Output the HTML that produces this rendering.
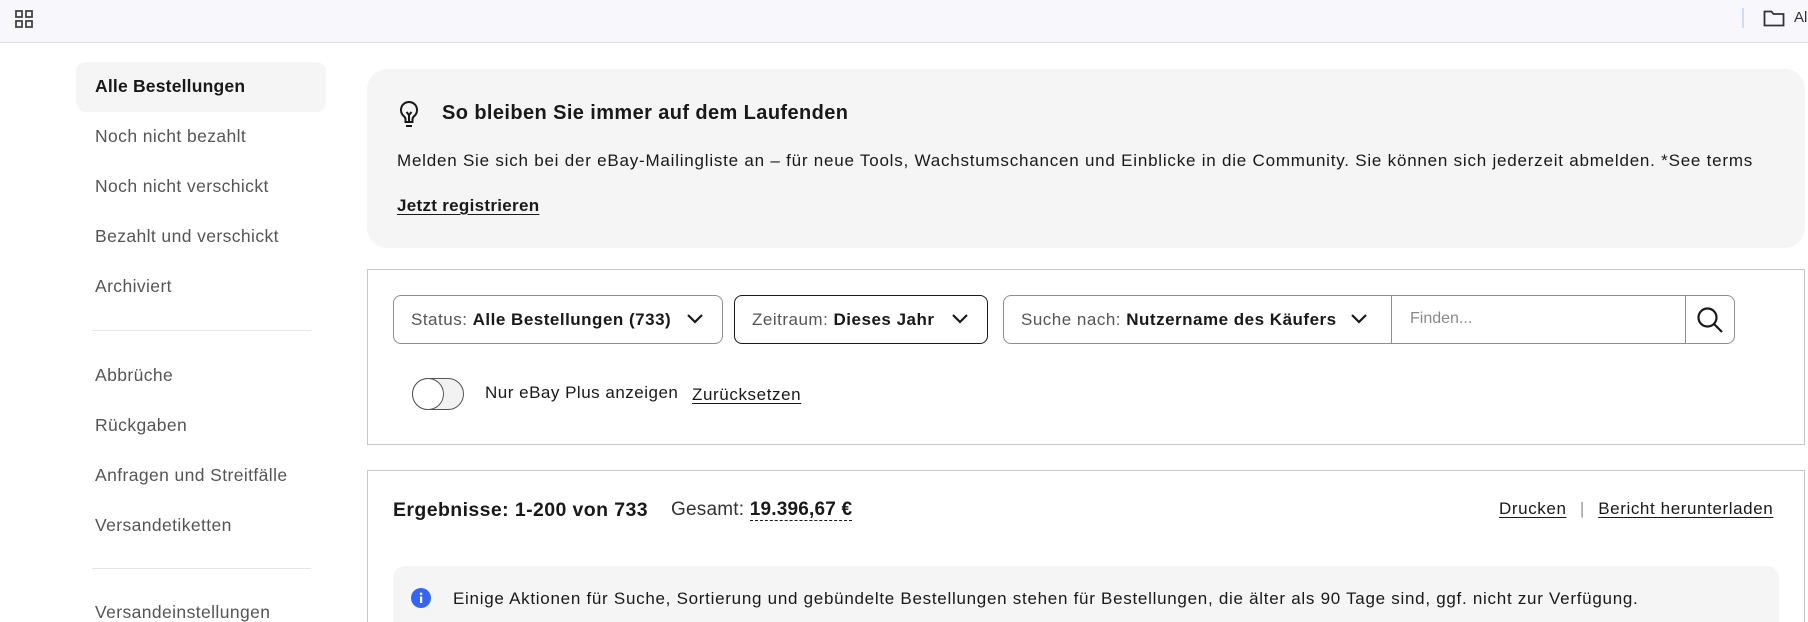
<!DOCTYPE html>
<html><head><meta charset="utf-8">
<style>
*{box-sizing:border-box;margin:0;padding:0}
html,body{width:1808px;height:622px;overflow:hidden}
body{background:#fff;font-family:"Liberation Sans",sans-serif;color:#191919}
#w{position:relative;width:1808px;height:622px;overflow:hidden}
.abs{position:absolute;white-space:nowrap}
.top{position:absolute;left:0;top:0;width:1808px;height:43px;background:#f8f8fc;border-bottom:1px solid #dcdce4}
.side{font-size:17.5px;letter-spacing:0.4px;color:#555}
.side.b{color:#191919;font-weight:bold;letter-spacing:0.2px}
.hl{position:absolute;left:76px;top:62px;width:250px;height:50px;background:#f5f5f5;border-radius:10px}
.div{position:absolute;left:92px;width:219px;height:1px;background:#e5e5e5}
.banner{position:absolute;left:367px;top:69px;width:1438px;height:179px;background:#f5f5f5;border-radius:20px}
.box{position:absolute;left:367px;width:1438px;border:1px solid #c7c7c7;background:#fff}
.dd{position:absolute;top:295px;height:49px;border:1px solid #8f8f8f;border-radius:8px;font-size:17px;letter-spacing:0.5px;padding-left:17px;line-height:47px;color:#555}
.dd b{color:#191919}
.dd svg{position:absolute;right:18px;top:16px}
u{text-decoration:underline;text-underline-offset:3px}
</style></head><body><div id="w">
<div class="top">
 <svg class="abs" style="left:14px;top:9px" width="20" height="20" viewBox="0 0 20 20" fill="none" stroke="#444" stroke-width="1.8"><rect x="2" y="2" width="6" height="6"/><rect x="12" y="2" width="6" height="6"/><rect x="2" y="12" width="6" height="6"/><rect x="12" y="12" width="6" height="6"/></svg>
 <div class="abs" style="left:1742px;top:8px;width:2px;height:20px;background:#d0dcf0"></div>
 <svg class="abs" style="left:1763px;top:9px" width="22" height="18" viewBox="0 0 22 18" fill="none" stroke="#333" stroke-width="1.8"><path d="M1.5 2.5h7l2 2.5h10v11.5h-19z"/></svg>
 <div class="abs" style="left:1794px;top:9px;font-size:15px;color:#333">Al</div>
</div>

<div class="hl"></div>
<div class="abs side b" style="left:95px;top:76px">Alle Bestellungen</div>
<div class="abs side" style="left:95px;top:126px">Noch nicht bezahlt</div>
<div class="abs side" style="left:95px;top:176px">Noch nicht verschickt</div>
<div class="abs side" style="left:95px;top:226px">Bezahlt und verschickt</div>
<div class="abs side" style="left:95px;top:276px">Archiviert</div>
<div class="div" style="top:330px"></div>
<div class="abs side" style="left:95px;top:365px">Abbrüche</div>
<div class="abs side" style="left:95px;top:415px">Rückgaben</div>
<div class="abs side" style="left:95px;top:465px">Anfragen und Streitfälle</div>
<div class="abs side" style="left:95px;top:515px">Versandetiketten</div>
<div class="div" style="top:568px"></div>
<div class="abs side" style="left:95px;top:602px">Versandeinstellungen</div>

<div class="banner"></div>
<svg class="abs" style="left:398px;top:100px" width="22" height="28" viewBox="0 0 22 28" fill="none" stroke="#191919" stroke-width="2"><path d="M11 2a8 8 0 0 0-5 14.3c1 .9 1.5 2 1.5 3.2V22h7v-2.5c0-1.2.5-2.3 1.5-3.2A8 8 0 0 0 11 2z"/><path d="M8 26h6M8.5 12l2.5 3 2.5-3M11 15v7"/></svg>
<div class="abs" style="left:442px;top:102px;font-size:20px;font-weight:bold;letter-spacing:0.4px">So bleiben Sie immer auf dem Laufenden</div>
<div class="abs" style="left:397px;top:151px;font-size:17px;letter-spacing:0.78px">Melden Sie sich bei der eBay-Mailingliste an – für neue Tools, Wachstumschancen und Einblicke in die Community. Sie können sich jederzeit abmelden. *See terms</div>
<div class="abs" style="left:397px;top:196px;font-size:17px;font-weight:bold;letter-spacing:0.3px"><u>Jetzt registrieren</u></div>

<div class="box" style="top:269px;height:176px"></div>
<div class="dd" style="left:393px;width:330px">Status: <b>Alle Bestellungen (733)</b><svg width="18" height="14" viewBox="0 0 18 14" fill="none" stroke="#191919" stroke-width="2.2"><path d="M2 3l7 7 7-7"/></svg></div>
<div class="dd" style="left:734px;width:254px;border-color:#191919">Zeitraum: <b>Dieses Jahr</b><svg width="18" height="14" viewBox="0 0 18 14" fill="none" stroke="#191919" stroke-width="2.2"><path d="M2 3l7 7 7-7"/></svg></div>
<div class="dd" style="left:1003px;width:732px;border-radius:8px">Suche nach: <b>Nutzername des Käufers</b><svg style="right:auto;left:346px" width="18" height="14" viewBox="0 0 18 14" fill="none" stroke="#191919" stroke-width="2.2"><path d="M2 3l7 7 7-7"/></svg></div>
<div class="abs" style="left:1391px;top:295px;width:1px;height:49px;background:#8f8f8f"></div>
<div class="abs" style="left:1685px;top:295px;width:1px;height:49px;background:#8f8f8f"></div>
<div class="abs" style="left:1410px;top:310px;font-size:16px;color:#8a8a8a">Finden...</div>
<svg class="abs" style="left:1695px;top:305px" width="30" height="30" viewBox="0 0 30 30" fill="none" stroke="#191919" stroke-width="2.2"><circle cx="12.5" cy="12.5" r="9"/><path d="M19 19l8 8"/></svg>
<div class="abs" style="left:412px;top:378px;width:52px;height:32px;border:1.5px solid #555;border-radius:16px;background:#f2f2f2"></div>
<div class="abs" style="left:412px;top:378px;width:32px;height:32px;border:1.5px solid #555;border-radius:50%;background:#fff"></div>
<div class="abs" style="left:485px;top:383px;font-size:17px;letter-spacing:0.5px">Nur eBay Plus anzeigen</div>
<div class="abs" style="left:692px;top:385px;font-size:17px;letter-spacing:0.6px"><u>Zurücksetzen</u></div>

<div class="box" style="top:470px;height:220px"></div>
<div class="abs" style="left:393px;top:499px;font-size:19.5px;font-weight:bold;letter-spacing:0.4px">Ergebnisse: 1-200 von 733</div>
<div class="abs" style="left:671px;top:499px;font-size:19px;color:#333;letter-spacing:0.2px">Gesamt: <b style="color:#191919;border-bottom:1.5px dashed #191919">19.396,67 €</b></div>
<div class="abs" style="left:1499px;top:499px;font-size:17px;letter-spacing:0.6px"><u>Drucken</u> <span style="color:#999;margin:0 8px">|</span> <u>Bericht herunterladen</u></div>
<div class="abs" style="left:393px;top:566px;width:1386px;height:100px;background:#f5f5f5;border-radius:12px"></div>
<svg class="abs" style="left:411px;top:588px" width="20" height="20" viewBox="0 0 20 20"><circle cx="10" cy="10" r="10" fill="#3665f3"/><rect x="9" y="8.5" width="2.2" height="6.5" fill="#fff"/><circle cx="10.1" cy="5.8" r="1.3" fill="#fff"/></svg>
<div class="abs" style="left:453px;top:589px;font-size:17px;letter-spacing:0.72px">Einige Aktionen für Suche, Sortierung und gebündelte Bestellungen stehen für Bestellungen, die älter als 90 Tage sind, ggf. nicht zur Verfügung.</div>
</div></body></html>
